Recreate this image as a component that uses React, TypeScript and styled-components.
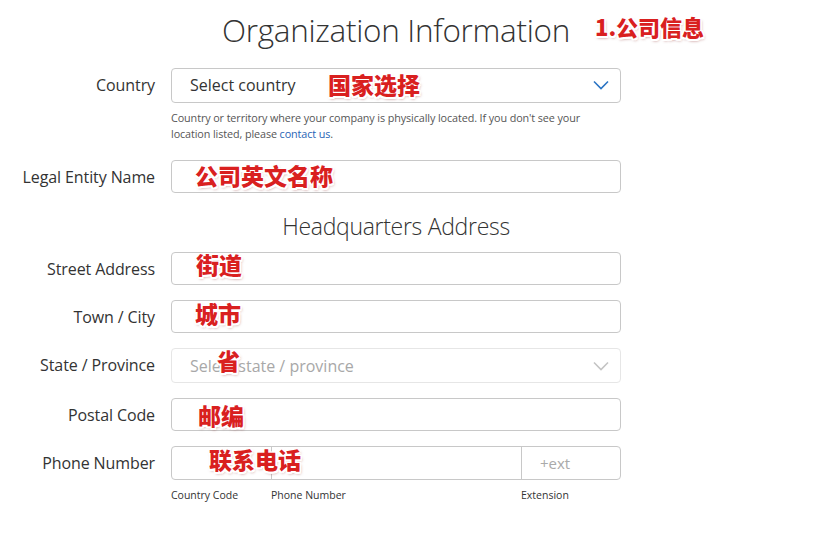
import React from 'react';
import styled, { createGlobalStyle } from 'styled-components';

const GlobalStyle = createGlobalStyle`
  html, body {
    margin: 0;
    padding: 0;
    background: #fff;
  }
  body {
    font-family: "Open Sans", "Noto Sans", sans-serif;
    color: #333;
  }
`;

const Page = styled.div`
  position: relative;
  width: 824px;
  height: 538px;
  overflow: hidden;
`;

const Form = styled.div`
  display: grid;
  grid-template-columns: 155px 450px;
  column-gap: 16px;
  align-items: start;
`;

const Heading = styled.h1<{ $size: number; $top: number; $bottom: number }>`
  grid-column: 2;
  margin: ${({ $top }) => $top}px 0 ${({ $bottom }) => $bottom}px;
  text-align: center;
  font-weight: 300;
  font-size: ${({ $size }) => $size}px;
  line-height: 1.2;
  color: #333;
  letter-spacing: -0.3px;
`;

const Label = styled.div`
  grid-column: 1;
  text-align: right;
  font-size: 16px;
  line-height: 34px;
  color: #333;
  letter-spacing: -0.1px;
`;

const FieldCell = styled.div<{ $gap: number }>`
  grid-column: 2;
  margin-bottom: ${({ $gap }) => $gap}px;
`;

const Box = styled.div<{ $disabled?: boolean; $h?: number }>`
  height: ${({ $h }) => $h ?? 33}px;
  box-sizing: border-box;
  border: 1px solid ${({ $disabled }) => ($disabled ? '#e6e6e6' : '#c8c8c8')};
  border-radius: 4px;
  background: #fff;
  display: flex;
  align-items: center;
  padding: 0 11px 0 18px;
  font-size: 16px;
  color: ${({ $disabled }) => ($disabled ? '#a8a8a8' : '#333')};
`;

const Value = styled.span`
  flex: 1;
`;

const Help = styled.p`
  margin: 7px 0 0;
  font-size: 10.8px;
  line-height: 16px;
  color: #555;
  letter-spacing: -0.1px;
  a {
    color: #1f63b5;
    text-decoration: none;
  }
`;

const PhoneBox = styled.div`
  height: 34px;
  box-sizing: border-box;
  border: 1px solid #c8c8c8;
  border-radius: 4px;
  display: grid;
  grid-template-columns: 99px 250px 1fr;
`;

const PhoneSeg = styled.div<{ $divider?: boolean }>`
  border-left: ${({ $divider }) => ($divider ? '1px solid #c8c8c8' : 'none')};
  display: flex;
  align-items: center;
  padding-left: 18px;
  font-size: 15px;
  color: #aaa;
`;

const SubLabels = styled.div`
  display: grid;
  grid-template-columns: 100px 250px 1fr;
  margin-top: 8px;
  font-size: 10.5px;
  color: #333;
`;

const Note = styled.span<{ $x: number; $y: number; $size?: number }>`
  position: absolute;
  left: ${({ $x }) => $x}px;
  top: ${({ $y }) => $y}px;
  font-family: "Noto Sans CJK SC", "Noto Sans", sans-serif;
  font-weight: 900;
  font-size: ${({ $size }) => $size ?? 23}px;
  line-height: 1;
  color: #d9201f;
  white-space: nowrap;
  text-shadow:
    -1.5px -1.5px 0 #fff, 1.5px -1.5px 0 #fff, -1.5px 1.5px 0 #fff, 1.5px 1.5px 0 #fff,
    0 -1.5px 0 #fff, 0 1.5px 0 #fff, -1.5px 0 0 #fff, 1.5px 0 0 #fff,
    1px 2px 3px rgba(120, 0, 0, 0.5);
`;

const Chevron = ({ color }: { color: string }) => (
  <svg width="16" height="10" viewBox="0 0 16 10">
    <path d="M1 1.5 L8 8.5 L15 1.5" fill="none" stroke={color} strokeWidth="1.6" />
  </svg>
);

const App: React.FC = () => {
  return (
    <Page>
      <GlobalStyle />
      <Form>
        <Heading $size={31.5} $top={11} $bottom={19}>Organization Information</Heading>

        <Label>Country</Label>
        <FieldCell $gap={18}>
          <Box $h={35}>
            <Value>Select country</Value>
            <Chevron color="#2a74c4" />
          </Box>
          <Help>
            Country or territory where your company is physically located. If you don't see your
            <br />
            location listed, please <a href="#">contact us</a>.
          </Help>
        </FieldCell>

        <Label>Legal Entity Name</Label>
        <FieldCell $gap={0}>
          <Box />
        </FieldCell>

        <Heading $size={23} $top={19} $bottom={12}>Headquarters Address</Heading>

        <Label>Street Address</Label>
        <FieldCell $gap={15}>
          <Box />
        </FieldCell>

        <Label>Town / City</Label>
        <FieldCell $gap={15}>
          <Box />
        </FieldCell>

        <Label>State / Province</Label>
        <FieldCell $gap={15}>
          <Box $disabled $h={35}>
            <Value>Select state / province</Value>
            <Chevron color="#c4c4c4" />
          </Box>
        </FieldCell>

        <Label>Postal Code</Label>
        <FieldCell $gap={15}>
          <Box />
        </FieldCell>

        <Label>Phone Number</Label>
        <FieldCell $gap={0}>
          <PhoneBox>
            <PhoneSeg />
            <PhoneSeg $divider />
            <PhoneSeg $divider>+ext</PhoneSeg>
          </PhoneBox>
          <SubLabels>
            <span>Country Code</span>
            <span>Phone Number</span>
            <span>Extension</span>
          </SubLabels>
        </FieldCell>
      </Form>

      <Note $x={595} $y={15} $size={22}>1.公司信息</Note>
      <Note $x={328} $y={73}>国家选择</Note>
      <Note $x={195} $y={164}>公司英文名称</Note>
      <Note $x={196} $y={253}>街道</Note>
      <Note $x={195} $y={302}>城市</Note>
      <Note $x={217} $y={349}>省</Note>
      <Note $x={198} $y={404}>邮编</Note>
      <Note $x={209} $y={448}>联系电话</Note>
    </Page>
  );
};

export default App;
